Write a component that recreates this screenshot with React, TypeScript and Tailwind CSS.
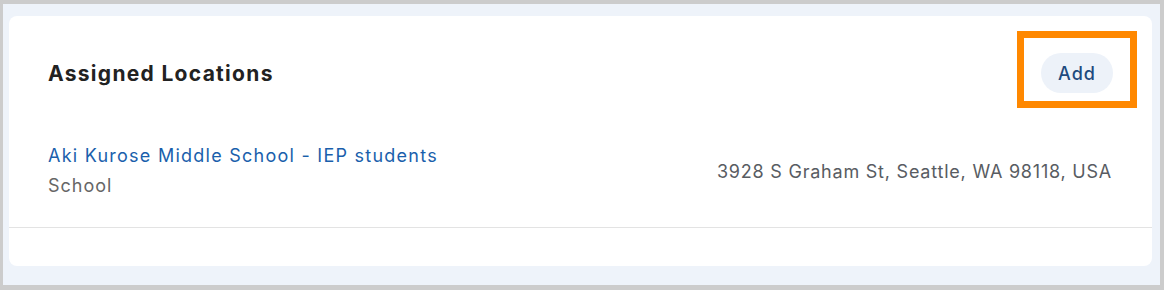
export default function App() {
  return (
    <div className="h-[290px] w-[1164px] bg-[#cccccc] pt-[4px] pl-[3px] pr-[4px] pb-[5px]" style={{ fontFamily: "Inter, 'Noto Sans', sans-serif" }}>
      <div className="h-full bg-[#eef3fa] pt-[12px] pl-[6px] pr-[8px] pb-[19px]">
        <div className="relative h-full rounded-lg bg-white">
          <div className="flex items-center justify-between pt-[37px] pl-[39px] pr-[39px]">
            <h2 className="mt-[2px] text-[21px] font-bold tracking-[1.3px] text-[#222222]">Assigned Locations</h2>
            <button className="h-[40px] w-[72px] rounded-full bg-[#edf2f9] text-[18px] font-medium tracking-[1px] text-[#1e4a7e]">
              Add
            </button>
          </div>
          <div className="flex items-center justify-between border-b border-[#e3e3e3] pt-[48px] pb-[26px] pl-[39px] pr-[40px]">
            <div className="leading-[30px]">
              <a className="block text-[18px] tracking-[1.25px] text-[#1a5fac]">Aki Kurose Middle School - IEP students</a>
              <div className="text-[18px] tracking-[1px] text-[#666666]">School</div>
            </div>
            <div className="text-[18px] tracking-[0.78px] text-[#585c62]">3928 S Graham St, Seattle, WA 98118, USA</div>
          </div>
          {/* highlight annotation */}
          <div className="pointer-events-none absolute left-[1008px] top-[15px] h-[77px] w-[120px] border-[7px] border-[#ff8800]" />
        </div>
      </div>
    </div>
  );
}
